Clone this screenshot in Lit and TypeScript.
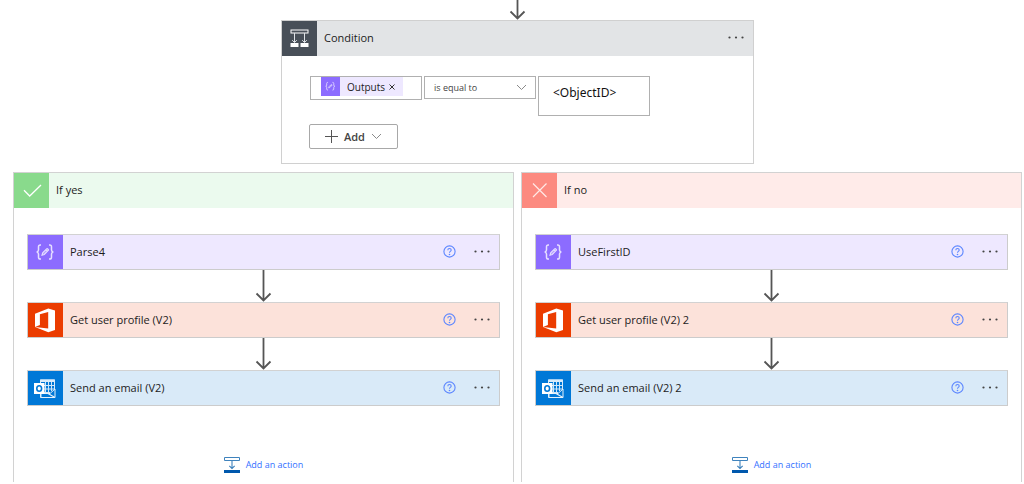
import { LitElement, html, svg, css, nothing } from "lit";
import { customElement, property } from "lit/decorators.js";

type IconName = "condition" | "yes" | "no" | "data" | "office" | "outlook";

const braces = svg`
  <path d="M13 10h-.8q-1.700 0-1.700 1.800v3.200q0 1.700-1.800 2q1.800.3 1.800 2v3.200q0 1.800 1.700 1.800h.8M21 10h.8q1.700 0 1.700 1.800v3.200q0 1.700 1.800 2q-1.800.3-1.800 2v3.200q0 1.800-1.700 1.800h-.8" fill="none" stroke="#e6dfff" stroke-width="1.500"/>
  <path d="M14 20.200l.7-2.400 3.900-3.900q.6-.5 1.200 0l.4.4q.5.600 0 1.200l-3.900 3.900zM17.700 14.900l1.600 1.600" fill="#b19cff" stroke="#e6dfff" stroke-width="1.100"/>`;

const icons = {
  condition: svg`
    <rect x="9" y="9" width="17" height="3" fill="none" stroke="#fff"/>
    <path d="M12.500 12v9M22.500 12v9M10.200 19.200l2.300 2.300 2.300-2.300M20.200 19.200l2.300 2.300 2.300-2.300" fill="none" stroke="#dfe2e6" stroke-width="1"/>
    <path d="M8.500 22h8v4h-8zM18.500 22h8v4h-8z" fill="#fff"/>`,
  yes: svg`<path d="M10 17.300l5.700 5.700L27 12" fill="none" stroke="#fff" stroke-width="1.300"/>`,
  no: svg`<path d="M11 10.500l13.500 13.500M24.500 10.500L11 24" fill="none" stroke="#ffe9e6" stroke-width="1.200"/>`,
  data: braces,
  office: svg`<path fill-rule="evenodd" d="M7 10.700L20.300 5.500l6.700 2v19.500l-6.700 2.200L7 23.900l13.200 1.700V9l-8.300 2.200v10.800L7 23.900z" fill="#fff"/>`,
  outlook: svg`
    <path d="M12.500 9h14v17.500h-14z" fill="#0078d7" stroke="#d8ebfa" stroke-width="1"/>
    <path d="M12 8.500h15v2.500H12z" fill="#d8ebfa"/>
    <path d="M17.500 11v11M20.500 11v11M23.500 11v9M13 14.500h13M13 18h13M13 21.500h9" fill="none" stroke="#cfe6f8" stroke-width="1"/>
    <path d="M13 22.500h9l5-4.500v8.500H13z" fill="#0078d7" stroke="#e6f2fb" stroke-width="1"/>
    <path d="M20 22.500l7 4" stroke="#e6f2fb" stroke-width="1.200"/>
    <path d="M6 12h10.500v11H6z" fill="#fff"/>
    <ellipse cx="11.200" cy="17.500" rx="2.400" ry="2.800" fill="none" stroke="#0078d7" stroke-width="1.600"/>`,
};

const chevron = html`<svg class="chevron" width="11" height="7" viewBox="0 0 11 7" aria-hidden="true">
  <path d="M1 1l4.500 4.500L10 1" fill="none" stroke="#8a8a8a" stroke-width="1"/>
</svg>`;

const base = css`
  * { box-sizing: border-box; }
  svg { display: block; flex: none; }
  button, input, select {
    font: inherit;
    color: inherit;
    margin: 0;
    padding: 0;
    border: 0;
    background: none;
    border-radius: 0;
  }
  button { cursor: pointer; }
`;

@customElement("flow-icon")
class FlowIcon extends LitElement {
  @property() name: IconName = "data";
  static styles = css`
    :host { display: block; flex: none; width: 35px; height: 35px; }
    .tile { display: block; width: 100%; height: 100%; }
    .condition { background: #484f58; }
    .yes { background: #89da8c; }
    .no { background: #fc8a80; }
    .data { background: #8c6cff; }
    .office { background: #eb3c00; }
    .outlook { background: #0078d7; }
  `;
  render() {
    return html`<svg class="tile ${this.name}" viewBox="0 0 35 35" aria-hidden="true">${icons[this.name]}</svg>`;
  }
}

@customElement("flow-arrow")
class FlowArrow extends LitElement {
  @property({ type: Number }) length = 32;
  static styles = css`
    :host { display: flex; justify-content: center; }
    svg { display: block; }
  `;
  render() {
    const h = this.length;
    return html`<svg width="17" height=${h} viewBox="0 0 17 ${h}" aria-hidden="true">
      <path d="M8.500 0V${h - 2}M1.500 ${h - 8.5}l7 7 7-7" fill="none" stroke="#555" stroke-width="1.800"/>
    </svg>`;
  }
}

@customElement("flow-header")
class FlowHeader extends LitElement {
  @property() icon: IconName = "data";
  @property() label = "";
  @property({ type: Boolean }) help = false;
  @property({ type: Boolean }) menu = false;
  static styles = [base, css`
    :host { display: block; }
    .bar { display: flex; align-items: center; min-height: 35px; }
    .condition { background: #e2e4e6; }
    .yes { background: #ebfaee; }
    .no { background: #ffebe9; }
    .data { background: #eee8ff; }
    .office { background: #fce2da; }
    .outlook { background: #d9eaf8; }
    .label { flex: 1; padding: 0 0 2px 7px; line-height: 16px; }
    .help { margin-right: 9px; padding-bottom: 2px; }
    .menu { padding: 8px 7px 10px 8px; }
  `];
  render() {
    return html`<div class="bar ${this.icon}">
      <flow-icon name=${this.icon}></flow-icon>
      <span class="label">${this.label}</span>
      ${this.help ? html`<button class="help" aria-label="Help for ${this.label}">
        <svg width="13" height="13" viewBox="0 0 13 13">
          <circle cx="6.500" cy="6.500" r="5.600" fill="none" stroke="#5c86ff" stroke-width="1.100"/>
          <path d="M4.800 5.200q0-1.700 1.700-1.700t1.700 1.500q0 .8-.9 1.400t-.8 1.400" fill="none" stroke="#5c86ff" stroke-width="1.100"/>
          <circle cx="6.500" cy="9.500" r=".8" fill="#5c86ff"/>
        </svg>
      </button>` : nothing}
      ${this.menu ? html`<button class="menu" aria-label="Menu for ${this.label}">
        <svg width="19" height="3" viewBox="0 0 19 3" fill="#444">
          <circle cx="2.500" cy="1.500" r="1.100"/><circle cx="9" cy="1.500" r="1.100"/><circle cx="15.500" cy="1.500" r="1.100"/>
        </svg>
      </button>` : nothing}
    </div>`;
  }
}

@customElement("flow-branch")
class FlowBranch extends LitElement {
  @property() icon: IconName = "yes";
  @property() label = "";
  @property({ attribute: false }) steps: { icon: IconName; label: string }[] = [];
  static styles = [base, css`
    :host { display: block; border: 1px solid #d2d2d2; border-bottom: 0; }
    .steps { padding: 26px 13px 0; }
    .card { border: 1px solid #ccc; border-top-color: #d2d2d2; height: 36px; overflow: hidden; }
    .foot { display: flex; justify-content: center; padding: 50px 0 8px; }
    .add { display: flex; align-items: center; gap: 6px; color: #3370ff; font-size: 9px; line-height: 18px; }
  `];
  render() {
    return html`
      <flow-header icon=${this.icon} label=${this.label}></flow-header>
      <div class="steps">
        ${this.steps.map((s, i) => html`
          ${i ? html`<flow-arrow length="32"></flow-arrow>` : nothing}
          <div class="card"><flow-header icon=${s.icon} label=${s.label} help menu></flow-header></div>`)}
      </div>
      <div class="foot">
        <button class="add">
          <svg width="16" height="16" viewBox="0 0 16 16" aria-hidden="true">
            <path d="M.5.5h15v3H.5z" fill="#fff" stroke="#3f83bd"/>
            <path d="M8 4v8M5.300 8.800L8 11.500l2.700-2.700" fill="none" stroke="#3f83bd" stroke-width="1.100"/>
            <path d="M0 13h16v3H0z" fill="#0058ad"/>
          </svg>
          Add an action
        </button>
      </div>`;
  }
}

@customElement("app-root")
class AppRoot extends LitElement {
  static styles = [base, css`
    :host {
      display: block;
      background: #fff;
      color: #1c1c1c;
      font-family: "Open Sans", "Noto Sans", sans-serif;
      font-size: 11px;
      padding: 0 2px 2px 13px;
    }
    .condition { max-width: 473px; margin: 0 auto 8px; border: 1px solid #d0d0d0; }
    .body { padding: 20px 27px 14px; }
    .row { display: grid; grid-template-columns: repeat(3, 112px); gap: 2px; align-items: start; padding-left: 1px; }
    .field { border: 1px solid #b0b0b0; background: #fff; }
    .operand { display: flex; height: 24px; padding-left: 10px; }
    .token { display: flex; align-items: center; height: 19px; background: #eee8ff; font-size: 10px; flex: none; }
    .chip { background: #8c6cff; margin-right: 7px; }
    .remove { padding: 0 8px 0 4px; line-height: 19px; }
    .entry { flex: 1; min-width: 0; width: 0; }
    .pick { display: grid; align-items: center; height: 23px; }
    .pick select { grid-area: 1 / 1; appearance: none; height: 21px; padding-left: 9px; font-size: 9px; color: #444; width: 100%; }
    .pick .chevron { grid-area: 1 / 1; justify-self: end; margin-right: 8px; pointer-events: none; }
    .value { width: 100%; height: 40px; padding: 0 14px 8px; font-family: "Noto Sans", sans-serif; font-size: 12px; color: #111; }
    .add { display: flex; align-items: center; gap: 6px; height: 25px; margin-top: 8px; padding: 0 15px; border: 1px solid #a8a8a8; border-radius: 2px; font-weight: 600; color: #444; }
    .branches { display: grid; grid-template-columns: 1fr 1fr; gap: 7px; }
  `];
  render() {
    return html`
      <flow-arrow length="20"></flow-arrow>
      <section class="condition">
        <flow-header icon="condition" label="Condition" menu></flow-header>
        <div class="body">
          <div class="row">
            <div class="field operand">
              <span class="token">
                <svg class="chip" width="19" height="19" viewBox="0 0 35 35" aria-hidden="true">${braces}</svg>
                Outputs
                <button class="remove" aria-label="Remove Outputs">
                  <svg width="6" height="6" viewBox="0 0 6 6"><path d="M.5.5l5 5M5.500.5l-5 5" stroke="#333" stroke-width="1"/></svg>
                </button>
              </span>
              <input class="entry" aria-label="Left operand">
            </div>
            <div class="field pick">
              <select aria-label="Operator"><option>is equal to</option></select>
              ${chevron}
            </div>
            <input class="field value" aria-label="Value" .value=${"<ObjectID>"}>
          </div>
          <button class="add">
            <svg width="13" height="13" viewBox="0 0 13 13" aria-hidden="true"><path d="M6.500 0v13M0 6.500h13" stroke="#555" stroke-width="1"/></svg>
            Add
            ${chevron}
          </button>
        </div>
      </section>
      <div class="branches">
        <flow-branch icon="yes" label="If yes" .steps=${[
          { icon: "data", label: "Parse4" },
          { icon: "office", label: "Get user profile (V2)" },
          { icon: "outlook", label: "Send an email (V2)" },
        ]}></flow-branch>
        <flow-branch icon="no" label="If no" .steps=${[
          { icon: "data", label: "UseFirstID" },
          { icon: "office", label: "Get user profile (V2) 2" },
          { icon: "outlook", label: "Send an email (V2) 2" },
        ]}></flow-branch>
      </div>`;
  }
}
